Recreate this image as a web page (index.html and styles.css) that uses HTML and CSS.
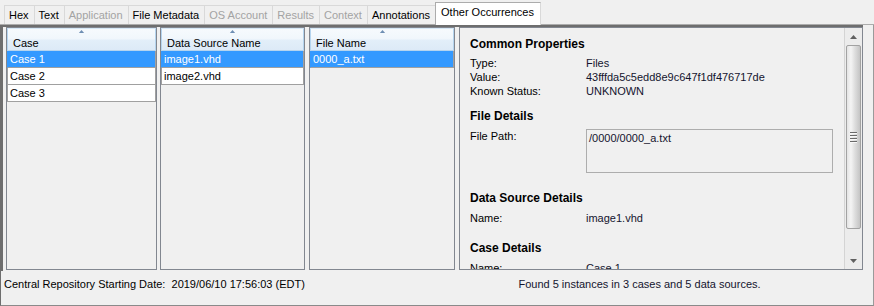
FILE: index.html
```html
<!DOCTYPE html>
<html>
<head>
<meta charset="utf-8">
<link rel="stylesheet" href="styles.css">
</head>
<body>
<div class="tabs">
  <div class="tab">Hex</div>
  <div class="tab">Text</div>
  <div class="tab disabled">Application</div>
  <div class="tab">File Metadata</div>
  <div class="tab disabled">OS Account</div>
  <div class="tab disabled">Results</div>
  <div class="tab disabled">Context</div>
  <div class="tab">Annotations</div>
  <div class="tab active">Other Occurrences</div>
</div>
<div class="content">
  <div class="panes">
    <div class="panel p1">
      <div class="thead">
        <svg class="sort" width="7" height="4" viewBox="0 0 7 4"><path d="M0 4 L3.5 0 L7 4 Z" fill="#6f8fb3"/></svg>
        <span>Case</span>
      </div>
      <div class="row sel">Case 1</div>
      <div class="row">Case 2</div>
      <div class="row">Case 3</div>
    </div>
    <div class="panel p2">
      <div class="thead">
        <svg class="sort" width="7" height="4" viewBox="0 0 7 4"><path d="M0 4 L3.5 0 L7 4 Z" fill="#6f8fb3"/></svg>
        <span>Data Source Name</span>
      </div>
      <div class="row sel">image1.vhd</div>
      <div class="row">image2.vhd</div>
    </div>
    <div class="panel p3">
      <div class="thead">
        <svg class="sort" width="7" height="4" viewBox="0 0 7 4"><path d="M0 4 L3.5 0 L7 4 Z" fill="#6f8fb3"/></svg>
        <span>File Name</span>
      </div>
      <div class="row sel">0000_a.txt</div>
    </div>
    <div class="panel p4">
      <div class="details">
        <div class="h">Common Properties</div>
        <div class="kv first"><span class="k">Type:</span><span class="v">Files</span></div>
        <div class="kv"><span class="k">Value:</span><span class="v">43fffda5c5edd8e9c647f1df476717de</span></div>
        <div class="kv"><span class="k">Known Status:</span><span class="v">UNKNOWN</span></div>
        <div class="h h2">File Details</div>
        <div class="kv path"><span class="k">File Path:</span><div class="box">/0000/0000_a.txt</div></div>
        <div class="h h3">Data Source Details</div>
        <div class="kv name"><span class="k">Name:</span><span class="v">image1.vhd</span></div>
        <div class="h h4">Case Details</div>
        <div class="kv name"><span class="k">Name:</span><span class="v">Case 1</span></div>
      </div>
      <div class="scrollbar">
        <div class="sbtn"><svg width="7" height="4" viewBox="0 0 7 4"><path d="M0 4 L3.5 0 L7 4 Z" fill="#606060"/></svg></div>
        <div class="track">
          <div class="thumb">
            <div class="grip"><i></i><i></i><i></i><i></i></div>
          </div>
        </div>
        <div class="sbtn"><svg width="7" height="4" viewBox="0 0 7 4"><path d="M0 0 L7 0 L3.5 4 Z" fill="#606060"/></svg></div>
      </div>
    </div>
  </div>
  <div class="status">
    <div class="sleft">Central Repository Starting Date:  2019/06/10 17:56:03 (EDT)</div>
    <div class="sright">Found 5 instances in 3 cases and 5 data sources.</div>
  </div>
</div>
</body>
</html>
```

FILE: styles.css
```css
html, body {
  margin: 0;
  padding: 0;
}
body {
  width: 874px;
  height: 306px;
  overflow: hidden;
  background: #f0f0f0;
  font-family: "Liberation Sans", Arial, sans-serif;
  font-size: 11px;
  color: #000;
}
.tabs {
  display: flex;
  align-items: flex-end;
  height: 24px;
  padding-left: 4px;
  border-bottom: 1px solid #acacac;
}
.tab {
  height: 18px;
  line-height: 19px;
  padding: 0 5px 0 4px;
  border-left: 1px solid #d9d9d9;
  border-top: 1px solid #d9d9d9;
  background: #f0f0f0;
  white-space: nowrap;
}
.tab.disabled {
  color: #a3a3a3;
}
.tab.active {
  height: 22px;
  line-height: 19px;
  margin-bottom: -1px;
  padding: 0 6px 0 5px;
  background: #fff;
  border: 1px solid #acacac;
  border-bottom: none;
  color: #000;
}
.tab.active + .tab, .tab:last-child {
  border-right: 1px solid #d9d9d9;
}
.content {
  height: 281px;
  box-sizing: border-box;
  border-left: 1px solid #6e6e6e;
  border-right: 1px solid #9a9a9a;
  border-bottom: 1px solid #8a8a8a;
  display: flex;
  flex-direction: column;
}
.panes {
  width: 862px;
  height: 246px;
  box-sizing: border-box;
  border-top: 2px solid #6e6e6e;
  border-left: 2px solid #6e6e6e;
  padding: 0 0 1px 3px;
  display: flex;
  gap: 4px;
}
.panel {
  box-sizing: border-box;
  border: 1px solid #828790;
  background: #f0f0f0;
  overflow: hidden;
}
.p1 { width: 151px; margin-right: -1px; }
.p2 { width: 145px; }
.p3 { width: 146px; }
.p4 { width: 404px; display: flex; }
.thead {
  height: 23px;
  box-sizing: border-box;
  border: 1px solid #b5d4ee;
  border-top-color: #d6e8f6;
  background: linear-gradient(#f6fafd 0%, #f1f7fc 45%, #e2eef9 55%, #ddeaf7 100%);
  display: flex;
  flex-direction: column;
  align-items: center;
}
.thead .sort {
  display: block;
  margin-top: 1px;
}
.thead span {
  align-self: flex-start;
  padding-left: 5px;
  line-height: 14px;
  margin-top: 3px;
}
.row {
  height: 16px;
  line-height: 16px;
  padding-left: 2px;
  background: #fff;
  border-bottom: 1px solid #a0a0a0;
  border-left: 1px solid #a0a0a0;
  border-right: 1px solid #a0a0a0;
  white-space: nowrap;
}
.row.sel {
  background: #3399ff;
  color: #fff;
  border-left-color: #3399ff;
}
.details {
  flex: 1;
  padding: 8px 0 0 10px;
  overflow: hidden;
  color: #000;
}
.h {
  font-weight: bold;
  font-size: 12px;
  line-height: 16px;
}
.kv {
  display: flex;
  line-height: 14px;
  white-space: nowrap;
}
.kv.first { margin-top: 4px; }
.k { width: 116px; flex: none; }
.v { color: #14142e; }
.h2 { margin-top: 10px; }
.kv.path { margin-top: 5px; }
.box {
  width: 247px;
  height: 44px;
  box-sizing: border-box;
  border: 1px solid #adadad;
  padding: 1px 2px;
  color: #14142e;
}
.h3 { margin-top: 17px; }
.kv.name { margin-top: 5px; }
.h4 { margin-top: 15px; }
.scrollbar {
  width: 17px;
  flex: none;
  border-left: 1px solid #d4d4d4;
  background: #ececec;
  display: flex;
  flex-direction: column;
}
.sbtn {
  height: 17px;
  display: flex;
  align-items: center;
  justify-content: center;
}
.track {
  flex: 1;
  padding: 0 1px;
  display: flex;
  flex-direction: column;
}
.thumb {
  height: 184px;
  box-sizing: border-box;
  border: 1px solid #a2a2a2;
  border-radius: 2px;
  background: linear-gradient(to right, #e4e4e4 0%, #f4f4f4 30%, #dedede 60%, #c4c4c4 100%);
  display: flex;
  align-items: center;
  justify-content: center;
}
.grip {
  display: flex;
  flex-direction: column;
  gap: 1px;
}
.grip i {
  display: block;
  width: 7px;
  height: 1px;
  background: #6a6a6a;
  border-bottom: 1px solid #f8f8f8;
}
.status {
  flex: 1;
  display: grid;
  grid-template-columns: 405px 1fr;
  padding-top: 6px;
  line-height: 14px;
  white-space: pre;
}
.sleft { padding-left: 3px; }
.sright { text-align: center; color: #14142e; }
```
